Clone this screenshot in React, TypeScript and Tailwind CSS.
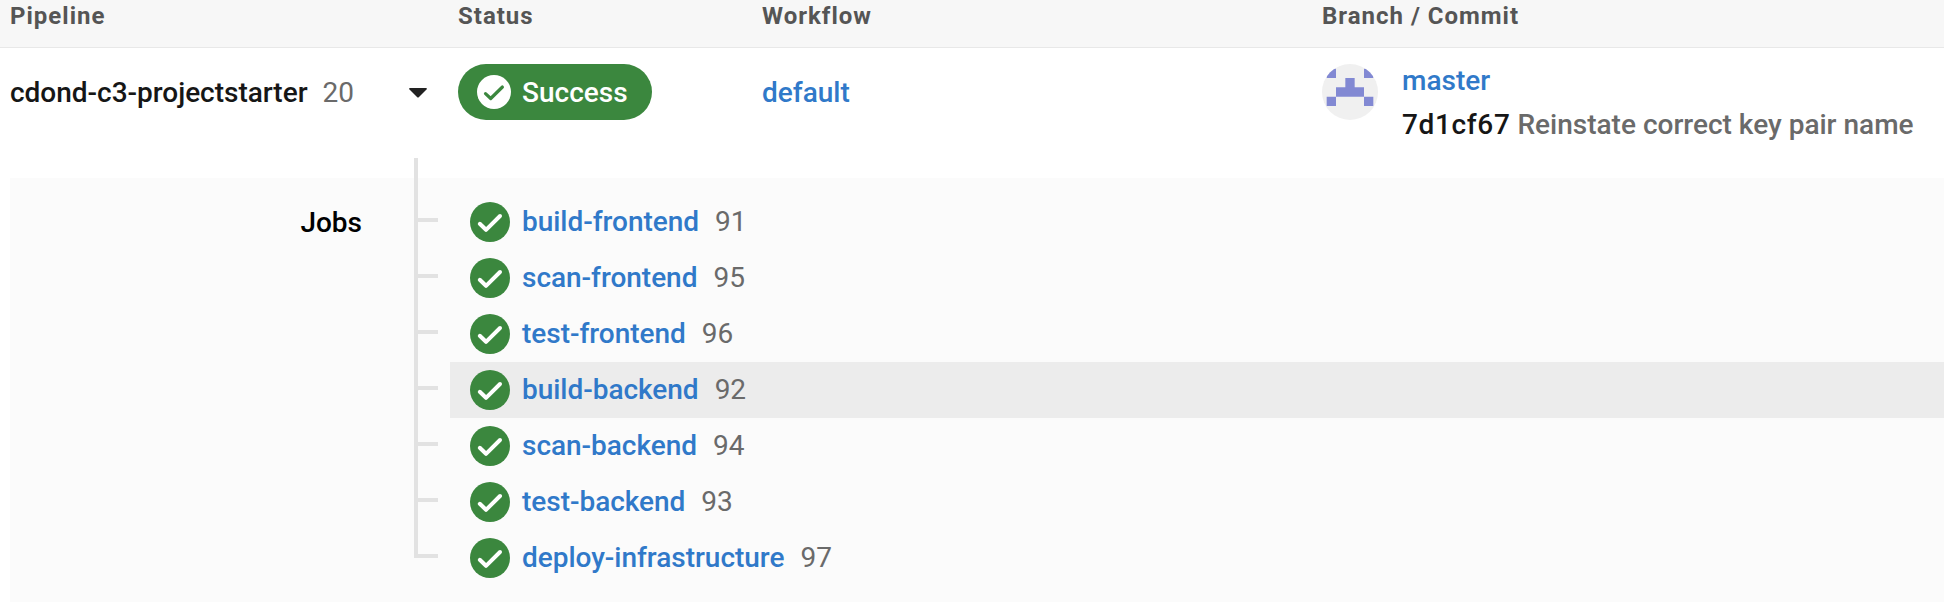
const COLUMNS = 'grid grid-cols-[448px_304px_560px_1fr] pl-[10px]';

const jobs = [
  { name: 'build-frontend', number: 91 },
  { name: 'scan-frontend', number: 95 },
  { name: 'test-frontend', number: 96 },
  { name: 'build-backend', number: 92, active: true },
  { name: 'scan-backend', number: 94 },
  { name: 'test-backend', number: 93 },
  { name: 'deploy-infrastructure', number: 97 },
];

function JobCheck() {
  return (
    <svg viewBox="0 0 40 40" className="size-10 shrink-0">
      <circle cx="20" cy="20" r="20" fill="#3b873e" />
      <path d="M9.800 21.800l6.200 6L30 14" fill="none" stroke="#fff" strokeWidth="4" strokeLinecap="round" strokeLinejoin="round" />
    </svg>
  );
}

function PillCheck() {
  return (
    <svg viewBox="0 0 34 34" className="size-[34px] shrink-0">
      <circle cx="17" cy="17" r="17" fill="#fff" />
      <path d="M8.500 18.600l5.200 4.900L25.400 12" fill="none" stroke="#3b873e" strokeWidth="3.2" strokeLinecap="round" strokeLinejoin="round" />
    </svg>
  );
}

function Avatar() {
  return (
    <svg viewBox="0 0 6 6" className="size-14 shrink-0 rounded-full bg-[#f0f0f0]">
      <path
        fill="#8289d3"
        d="M.5 .5h1v1h-1zM4.5 .5h1v1h-1zM2.5 1.5h1v1h1v1h-3v-1h1zM.5 3.5h1v1h-1zM4.5 3.5h1v1h-1z"
      />
    </svg>
  );
}

function Header() {
  return (
    <div className={COLUMNS + ' h-12 border-b border-[#e8e8e8] bg-[#f7f7f7] text-2xl leading-[32px] font-bold tracking-[1px] text-[#555]'}>
      <div>Pipeline</div>
      <div>Status</div>
      <div>Workflow</div>
      <div>Branch / Commit</div>
    </div>
  );
}

function PipelineRow() {
  return (
    <div className={COLUMNS + ' h-[130px] pt-4 leading-[58px] font-medium'}>
      <div className="flex h-14 items-center">
        <span className="pt-[2px] leading-[56px] tracking-[-0.02px] text-[#161616]">cdond-c3-projectstarter</span>
        <span className="ml-[15px] pt-[2px] leading-[56px] font-normal text-[#6a6a6a]">20</span>
        <svg viewBox="0 0 18 10" className="mt-[2px] mr-[31px] ml-auto h-[10px] w-[18px]">
          <path d="M1 0h16q1.500.5.5 1.500L10 9q-1 1-2 0L.5 1.500Q-.500.5 1 0z" fill="#222" />
        </svg>
      </div>
      <div>
        <div className="flex h-14 w-[194px] items-center gap-[11px] rounded-full bg-[#3b873e] pl-[19px] text-white">
          <PillCheck />
          <span className="pt-[2px] leading-[56px]">Success</span>
        </div>
      </div>
      <a className="text-[#3079c9]">default</a>
      <div className="flex gap-6">
        <Avatar />
        <div className="-mt-[5px] leading-[44px] whitespace-nowrap">
          <div className="text-[#3079c9]">master</div>
          <div className="text-[#6a6a6a]">
            <span className="tracking-[0.65px] text-[#161616]">7d1cf67</span> Reinstate correct key pair name
          </div>
        </div>
      </div>
    </div>
  );
}

function Tree() {
  return (
    <div className="-mt-9 flex h-[400px] w-6 flex-col justify-end border-l-4 border-[#e2e2e2]">
      {jobs.map((job) => (
        <div key={job.name} className="h-14 shrink-0 border-b-4 border-[#e2e2e2]" />
      ))}
    </div>
  );
}

function JobsPanel() {
  return (
    <div className="ml-[10px] flex h-[424px] bg-[#fbfbfb] pt-4">
      <div className="w-[352px] text-right leading-[57px] font-medium text-black">Jobs</div>
      <div className="w-[52px] shrink-0" />
      <Tree />
      <div className="ml-3 flex-1">
        {jobs.map((job) => (
          <div key={job.name} className={job.active ? 'flex h-14 items-center bg-[#ececec] pl-5' : 'flex h-14 items-center pl-5'}>
            <JobCheck />
            <a className="ml-3 leading-[56px] font-medium tracking-[-0.03px] text-[#3079c9]">{job.name}</a>
            <span className="ml-4 leading-[56px] text-[#6a6a6a]">{job.number}</span>
          </div>
        ))}
      </div>
    </div>
  );
}

export default function App() {
  return (
    <div className="h-[608px] w-[1944px] overflow-hidden bg-white font-['Roboto',sans-serif] text-[28px] antialiased">
      <Header />
      <PipelineRow />
      <JobsPanel />
    </div>
  );
}
